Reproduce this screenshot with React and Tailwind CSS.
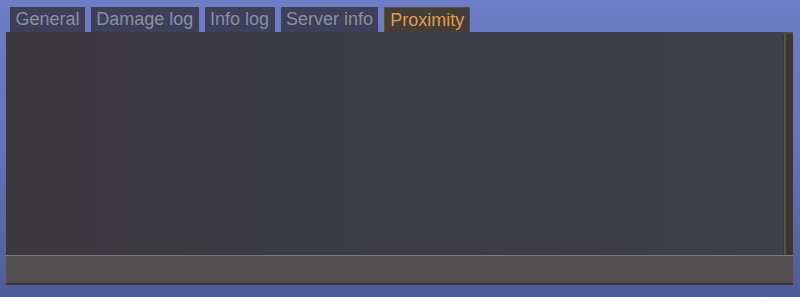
import React from 'react'

const tabs = ['General', 'Damage log', 'Info log', 'Server info', 'Proximity']

function Tab({ text, active }) {
    return (
        <div
            className={
                active
                    ? 'h-[25px] px-[5px] leading-[24px] bg-[#473d37] border border-b-0 border-[#5d4e42] text-[#dc9c52]'
                    : 'h-[25px] px-[5.4px] leading-[25px] bg-[#3d4058] text-[#8d8f9f]'
            }
        >
            {text}
        </div>
    )
}

export default function App() {
    return (
        <div
            className="w-[800px] h-[297px] overflow-hidden bg-linear-to-b from-[#6c7ec5] via-[#6474b8] to-[#4f5c98] pl-[6px] pr-[7px] pt-[7px]"
            style={{ fontFamily: '"Liberation Sans", Arial, sans-serif' }}
        >
            <div className="flex gap-[6px] pl-[4px] text-[18px]">
                {tabs.map((t) => (
                    <Tab key={t} text={t} active={t === 'Proximity'} />
                ))}
            </div>
            <div className="flex flex-col h-[253px]">
                <div className="flex flex-1 bg-linear-to-r from-[#3a383c] via-[#3b3b45] to-[#3e404c]">
                    <div className="flex-1"></div>
                    <div className="w-[10px] bg-[#3d3732] border-t-2 border-[#4c4a50] flex">
                        <div className="w-[2px] ml-[1px] bg-[#5a5149]"></div>
                    </div>
                </div>
                <div className="h-[1px] bg-[#7d7b7d]"></div>
                <div className="h-[27px] bg-[#545052]"></div>
                <div className="h-[2px] bg-[#37353a]"></div>
            </div>
        </div>
    )
}
